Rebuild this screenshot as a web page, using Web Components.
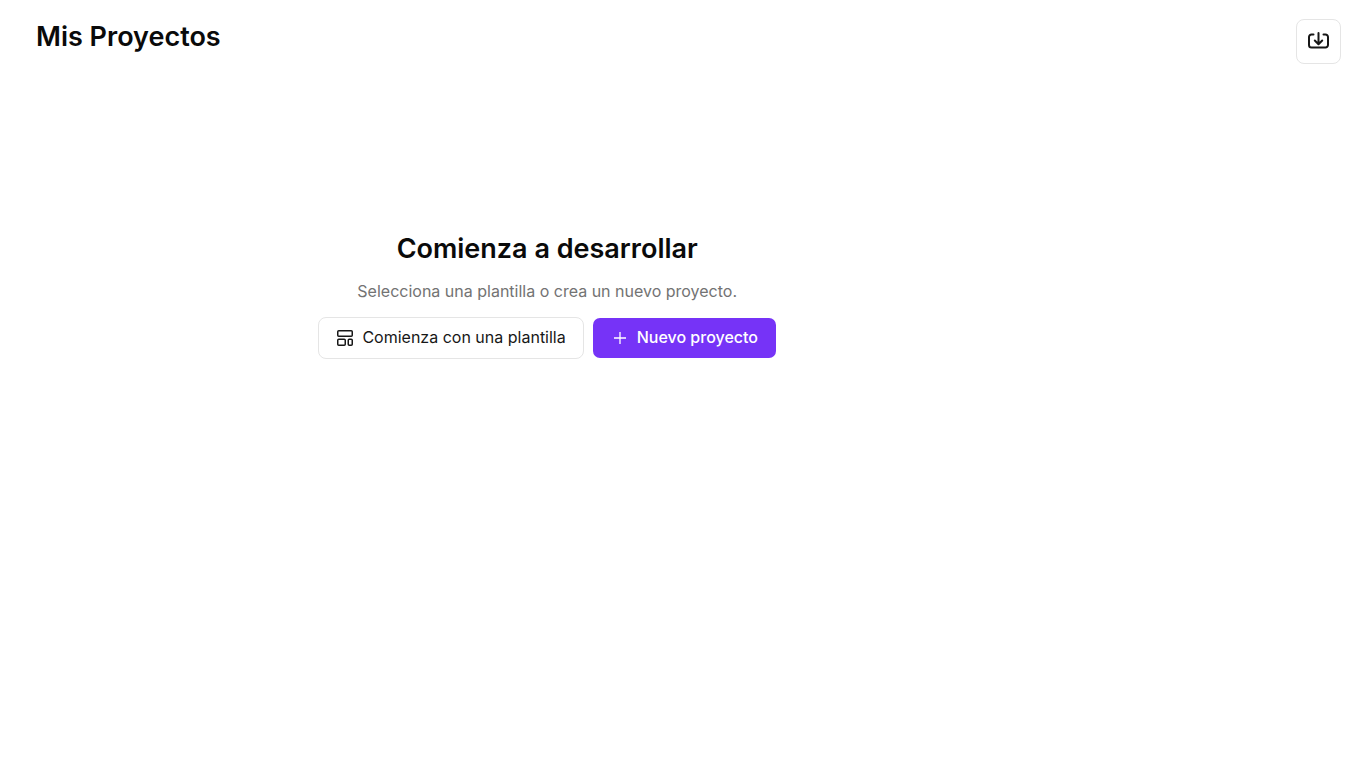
<!DOCTYPE html>
<html lang="es">
<head>
<meta charset="utf-8">
<meta name="viewport" content="width=device-width, initial-scale=1">
<title>Mis Proyectos</title>
<style>
body { margin: 0; background: #fff; color: #0a0a0a; font-family: Inter, sans-serif; }
</style>
</head>
<body>
<projects-page></projects-page>

<template id="page-template">
  <style>
    :host { display: block; }
  </style>
  <page-header>Mis Proyectos
    <action-button slot="actions" variant="icon" label="Importar proyecto">
      <svg slot="icon" width="23" height="23" viewBox="0 0 23 23" fill="none" stroke="currentColor" stroke-width="2" stroke-linecap="round" stroke-linejoin="round" aria-hidden="true">
        <path d="M6.5 4.5H4.500a2.500 2.500 0 0 0-2.500 2.500v8a2.500 2.500 0 0 0 2.500 2.500h14a2.500 2.500 0 0 0 2.500-2.500V7a2.500 2.500 0 0 0-2.500-2.500h-2M11.500 3v11M7.800 10.500l3.700 3.700 3.700-3.700"/>
      </svg>
    </action-button>
  </page-header>
  <empty-state>
    <span slot="title">Comienza a desarrollar</span>
    <span slot="text">Selecciona una plantilla o crea un nuevo proyecto.</span>
    <action-button variant="outline">
      <svg slot="icon" width="18" height="18" viewBox="0 0 18 18" fill="none" stroke="currentColor" stroke-width="1.5" aria-hidden="true">
        <rect x="1.75" y="1.75" width="14.5" height="5.5" rx="1"/>
        <rect x="1.75" y="10.25" width="7.5" height="6" rx="1"/>
        <rect x="12.25" y="10.25" width="4" height="6" rx="1"/>
      </svg>Comienza con una plantilla</action-button>
    <action-button variant="primary">
      <svg slot="icon" width="18" height="18" viewBox="0 0 18 18" fill="none" stroke="currentColor" stroke-width="1.3" aria-hidden="true">
        <path d="M3 9h12M9 3v12"/>
      </svg>Nuevo proyecto</action-button>
  </empty-state>
</template>

<template id="header-template">
  <style>
    :host { display: block; }
    header { display: flex; justify-content: space-between; align-items: flex-start; padding: 19px 27px 0 36px; }
    h1 { margin: 0; font-size: 27px; line-height: 36px; font-weight: 600; }
  </style>
  <header><h1><slot></slot></h1><slot name="actions"></slot></header>
</template>

<template id="empty-template">
  <style>
    :host { display: block; }
    section { width: 80%; padding-top: 167px; display: flex; flex-direction: column; align-items: center; text-align: center; }
    h2 { margin: 0; font-size: 27px; line-height: 36px; font-weight: 600; }
    p { margin: 12px 0 14px; font-size: 16px; line-height: 24px; color: #737373; }
    .actions { display: flex; align-items: center; gap: 9px; }
  </style>
  <section>
    <h2><slot name="title"></slot></h2>
    <p><slot name="text"></slot></p>
    <div class="actions"><slot></slot></div>
  </section>
</template>

<template id="button-template">
  <style>
    :host { display: block; }
    button { display: flex; align-items: center; justify-content: center; gap: 8px; box-sizing: border-box; margin: 0; padding: 8px 18px; border: 1px solid #e5e5e5; border-radius: 8px; background: #fff; color: #171717; font: 400 16px/22px Inter, sans-serif; white-space: nowrap; cursor: pointer; }
    .label { padding-bottom: 2px; }
    :host([variant="outline"]) button { padding: 8px 17px; }
    :host([variant="primary"]) button { border: 0; border-radius: 7px; background: #7633f7; color: #fff; font-weight: 500; }
    :host([variant="icon"]) button { width: 45px; height: 45px; padding: 0; }
    :host([variant="icon"]) .label { display: none; }
    ::slotted(svg) { display: block; flex: none; }
  </style>
  <button type="button"><slot name="icon"></slot><span class="label"><slot></slot></span></button>
</template>

<script>
class TemplateElement extends HTMLElement {
  constructor() {
    super();
    const template = document.getElementById(this.constructor.template);
    this.attachShadow({ mode: 'open' }).append(document.importNode(template.content, true));
  }
}
class ActionButton extends TemplateElement {
  static template = 'button-template';
  connectedCallback() {
    const label = this.getAttribute('label');
    if (label) this.shadowRoot.querySelector('button').setAttribute('aria-label', label);
  }
}
class PageHeader extends TemplateElement { static template = 'header-template'; }
class EmptyState extends TemplateElement { static template = 'empty-template'; }
class ProjectsPage extends TemplateElement { static template = 'page-template'; }
customElements.define('action-button', ActionButton);
customElements.define('page-header', PageHeader);
customElements.define('empty-state', EmptyState);
customElements.define('projects-page', ProjectsPage);
</script>
</body>
</html>
